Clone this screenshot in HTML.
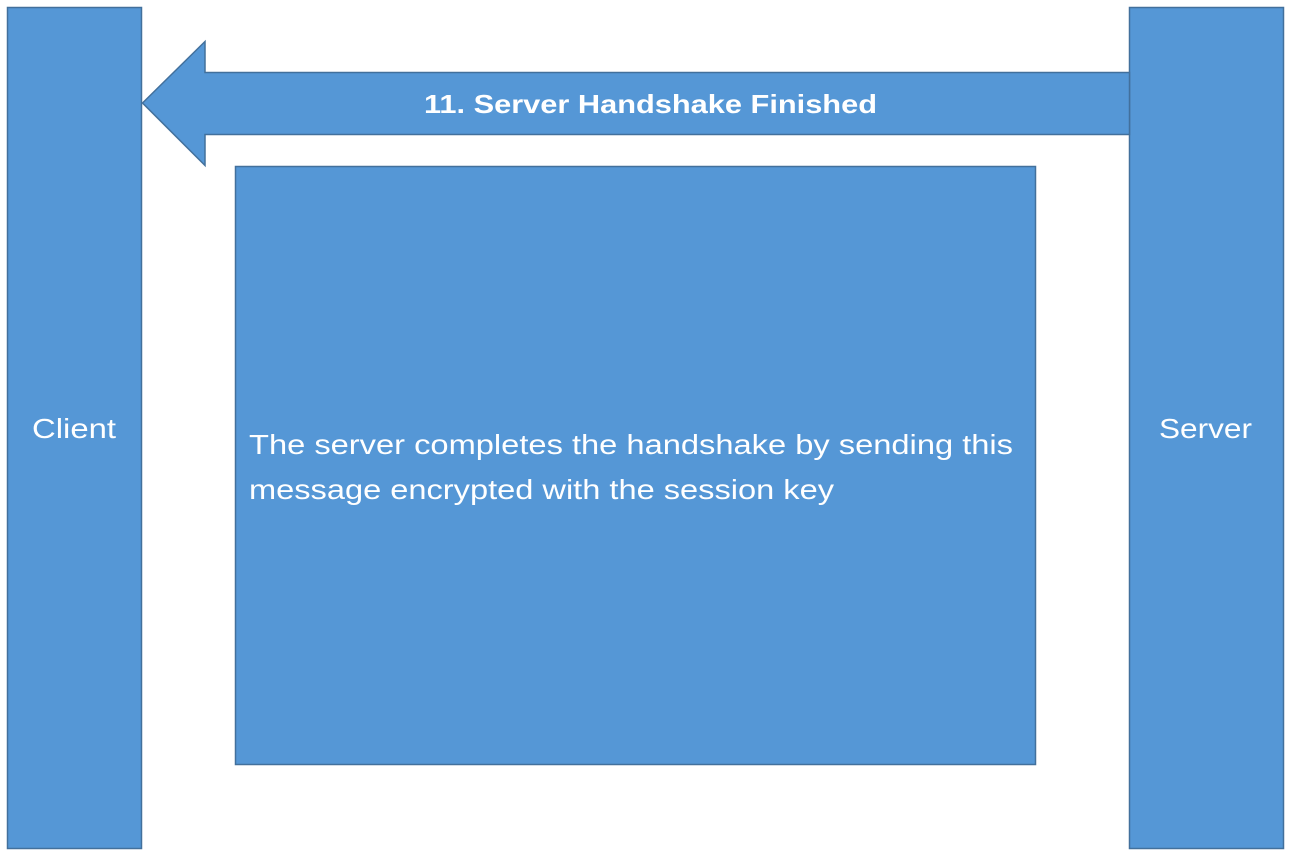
<!DOCTYPE html>
<html><head><style>html,body{margin:0;padding:0;background:#fff;}svg{display:block}</style></head>
<body>
<svg width="1291" height="855" xmlns="http://www.w3.org/2000/svg" font-family="Liberation Sans, sans-serif" fill="#fff">
<rect x="7.5" y="7.5" width="134" height="841" fill="#5597d6" stroke="#42709c" stroke-width="1.5"/>
<rect x="1129.5" y="7.5" width="154" height="841" fill="#5597d6" stroke="#42709c" stroke-width="1.5"/>
<polygon points="142.5,103 205,41.5 205,72.5 1129.5,72.5 1129.5,134.5 205,134.5 205,165.5" fill="#5597d6" stroke="#42709c" stroke-width="1.5"/>
<rect x="235.5" y="166.5" width="800" height="598" fill="#5597d6" stroke="#42709c" stroke-width="1.5"/>
<text x="424" y="113" font-size="26" font-weight="bold" textLength="453" lengthAdjust="spacingAndGlyphs">11. Server Handshake Finished</text>
<text x="32" y="438" font-size="28" textLength="84" lengthAdjust="spacingAndGlyphs">Client</text>
<text x="1159" y="438" font-size="28" textLength="93" lengthAdjust="spacingAndGlyphs">Server</text>
<text x="249" y="454" font-size="28" textLength="764" lengthAdjust="spacingAndGlyphs">The server completes the handshake by sending this</text>
<text x="249" y="499" font-size="28" textLength="585" lengthAdjust="spacingAndGlyphs">message encrypted with the session key</text>
</svg>
</body></html>
